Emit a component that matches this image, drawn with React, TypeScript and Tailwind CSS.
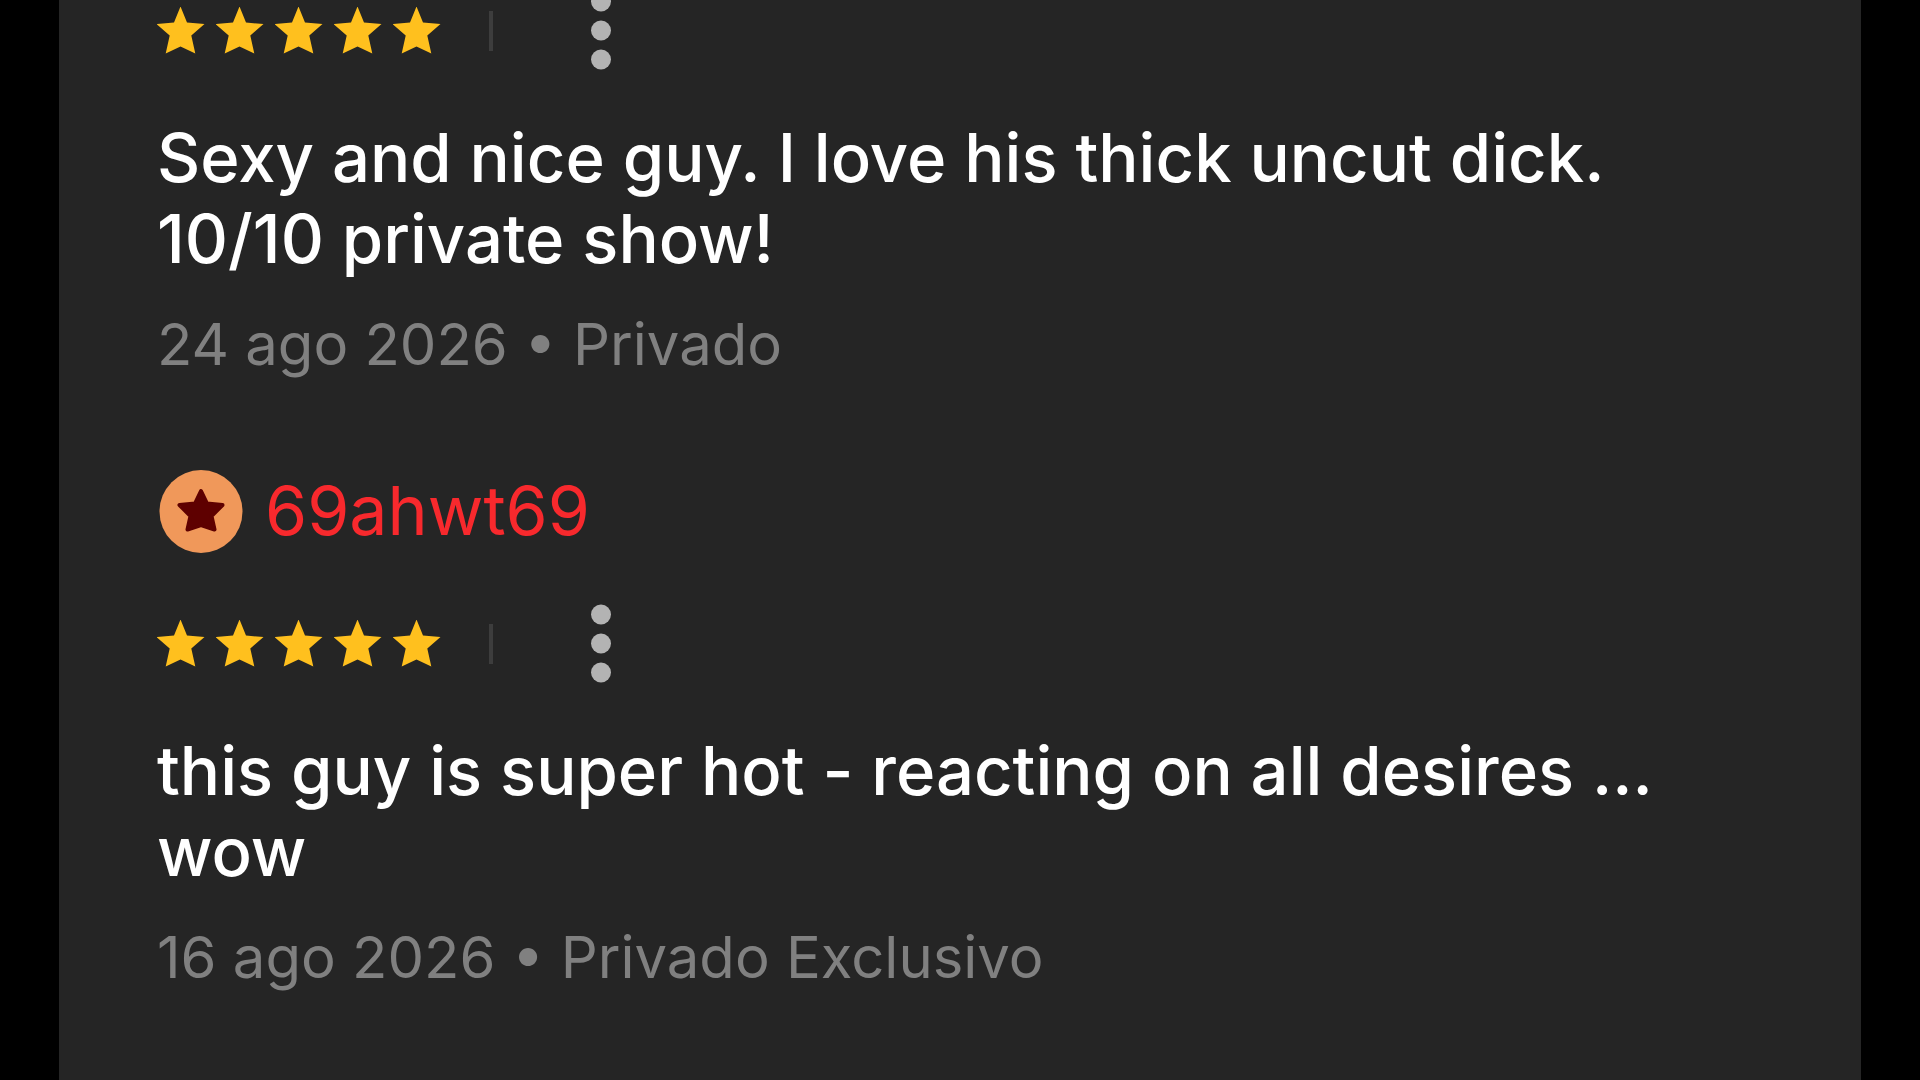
import React from 'react';

interface Review {
    id: number;
    username?: string;
    rating: number;
    text: string;
    date: string;
    showType: string;
}

const REVIEWS: Review[] = [
    {
        id: 1,
        rating: 5,
        text: 'Sexy and nice guy. I love his thick uncut dick. 10/10 private show!',
        date: '24 ago 2026',
        showType: 'Privado'
    },
    {
        id: 2,
        username: '69ahwt69',
        rating: 5,
        text: 'this guy is super hot - reacting on all desires ... wow',
        date: '16 ago 2026',
        showType: 'Privado Exclusivo'
    }
];

const RatingStar = () => (
    <svg viewBox="0 0 48 48" className="w-12 h-12" fill="#ffc01e" aria-hidden="true">
        <path d="M23.5 -0.5 L30 15.6 L47.5 17 L34.3 28.5 L38.3 46.5 L23.5 39.5 L8.7 46.5 L12.7 28.5 L-0.5 17 L17 15.6 Z" />
    </svg>
);

const LevelBadge = () => (
    <svg viewBox="0 0 86 84" className="w-[86px] h-[84px] shrink-0" aria-hidden="true">
        <circle cx="44" cy="41.5" r="41.5" fill="#f0985a" />
        <path
            d="M44 21 L50 33.5 L65.5 35 L54.5 46 L57.5 59.5 L44 55 L30.5 59.5 L33.5 46 L22.5 35 L38 33.5 Z"
            fill="#5e0000"
            stroke="#5e0000"
            strokeWidth="4"
            strokeLinejoin="round"
        />
    </svg>
);

const ReviewItem: React.FC<{ review: Review }> = ({ review }) => (
    <article>
        {/* Author */}
        {review.username && (
            <div className="flex items-start gap-[22px] mb-[59px]">
                <LevelBadge />
                <a href="#profile" className="text-[68px] leading-[81px] text-[#f8292d]">
                    {review.username}
                </a>
            </div>
        )}

        {/* Rating */}
        <div className="flex items-center h-[62px]">
            <div className="flex gap-[11px]" role="img" aria-label={`${review.rating} / 5`}>
                {Array.from({ length: review.rating }, (_, i) => (
                    <RatingStar key={i} />
                ))}
            </div>
            <span className="ml-12 w-1 h-10 bg-[#3d3d3d]" />
            <button type="button" aria-label="Más" className="ml-[98px]">
                <svg viewBox="0 0 20 62" className="block w-5 h-[62px] overflow-visible" fill="#b3b3b3">
                    <circle cx="10" cy="1.5" r="10" />
                    <circle cx="10" cy="30.5" r="10" />
                    <circle cx="10" cy="59.5" r="10" />
                </svg>
            </button>
        </div>

        <p className="mt-[55px] text-[67px] leading-[81px] font-medium text-white">{review.text}</p>
        <p className="mt-[29px] text-[58px] leading-[72px] text-[#808080]">
            {review.date} • {review.showType}
        </p>
    </article>
);

const App = () => (
    <div className="min-h-screen bg-black px-[59px] font-['Inter',sans-serif]">
        <main className="min-h-screen bg-[#252525] px-[98px] flex flex-col gap-[90px]">
            {REVIEWS.map((review) => (
                <ReviewItem key={review.id} review={review} />
            ))}
        </main>
    </div>
);

export default App;
